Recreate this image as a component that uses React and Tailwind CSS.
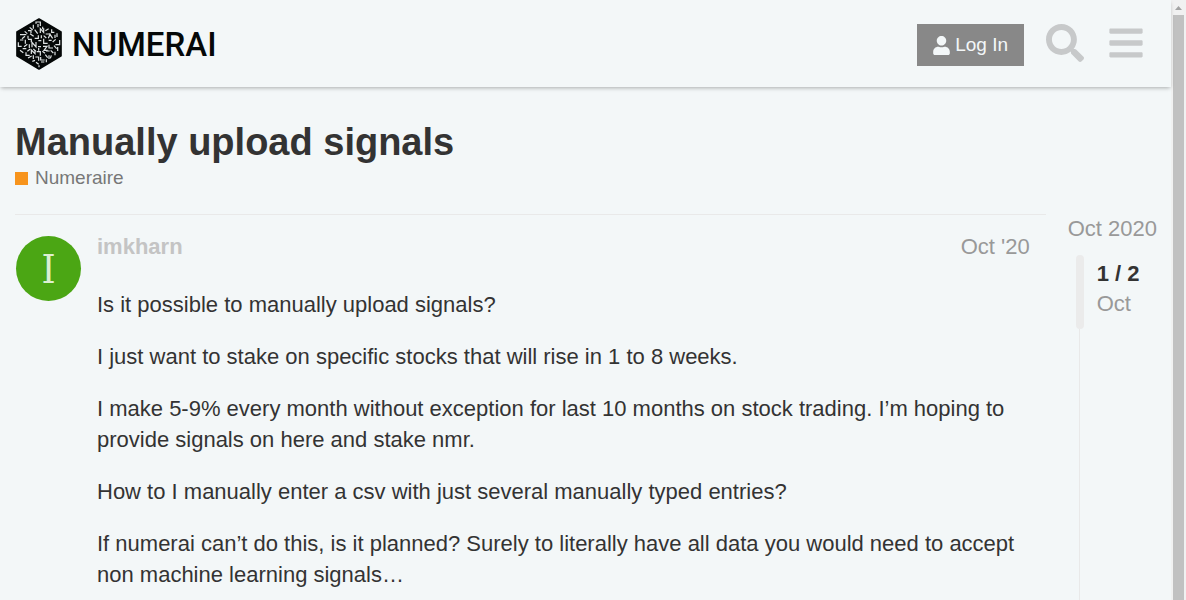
import { FaUser, FaSearch, FaBars } from "react-icons/fa";

const paragraphs = [
  "Is it possible to manually upload signals?",
  "I just want to stake on specific stocks that will rise in 1 to 8 weeks.",
  "I make 5-9% every month without exception for last 10 months on stock trading. I’m hoping to provide signals on here and stake nmr.",
  "How to I manually enter a csv with just several manually typed entries?",
  "If numerai can’t do this, is it planned? Surely to literally have all data you would need to accept non machine learning signals…",
];

function HexMark() {
  return (
    <svg viewBox="0 0 138 156" className="h-[52px] w-[46px]" aria-hidden="true">
      <path
        d="M69 3 L135 42 V113 L69 153 L3 113 V42 Z"
        fill="#050808"
        stroke="#050808"
        strokeWidth="5"
        strokeLinejoin="round"
      />
      <g fill="none" stroke="#dfe3e4" strokeWidth="3.6">
        <path d="M60 17V12H73V24M66 18V28M52 20V32M41 28L50 36M80 26V34M36 38H45V46" />
        <path d="M26 40L34 47M12 50H31M56 35L65 47M73 45V32L83 43V31M88 38L98 32M89 48H103" />
        <path d="M107 34V43H115M18 62L27 55M36 53V62M42 47L53 55M56 61H67V52M76 52V61M83 53L91 60" />
        <path d="M97 61L102 49L110 61M117 50V60M123 46V57M7 73V85H17M12 66H22M28 65V77M36 64H46V73" />
        <path d="M48 88V73L60 87V72M67 68H76M83 62V76H95M98 67H107M110 72L119 64M131 66V80H118" />
        <path d="M24 86L34 79M40 79V90M20 92H31M34 100L43 93M52 93L60 100M66 86H75M68 98V90" />
        <path d="M81 85H93L84 97H95M99 80V90H111M114 83L122 92M125 87V99M12 97L22 104M30 103V112H41" />
        <path d="M46 108V96L57 107V96M62 101H73V113M79 100L87 106M90 99H101M104 97L112 105M117 101V112" />
        <path d="M36 120L47 114M52 112V123M58 117H68V128M74 117V126H86M88 110L95 119M99 112V123M106 112L103 121" />
        <path d="M49 130L57 127M60 133L68 139M75 132H85M69 142V148M91 124V133" />
      </g>
    </svg>
  );
}

function Header() {
  return (
    <header className="relative flex h-[87px] shrink-0 items-start justify-between pl-4 pr-7 shadow-[0_2px_4px_-1px_rgba(0,0,0,0.3)]">
      <a href="#home" aria-label="Numerai" className="flex items-center gap-2.5 pt-[18px]">
        <HexMark />
        <span className="pt-0.5 font-[Roboto,sans-serif] text-[33px] leading-[40px] font-medium text-[#050808]">
          NUMERAI
        </span>
      </a>
      <nav className="flex items-start pt-6">
        <button
          type="button"
          className="mr-[22px] flex h-[42px] items-center gap-[5px] bg-[#888888] px-4 text-[19px] text-[#f3f7f8]"
        >
          <FaUser className="h-[19px] w-[17px]" aria-hidden="true" />
          Log In
        </button>
        <button type="button" aria-label="Search" className="mr-[25px] text-[#c7c9ca]">
          <FaSearch className="size-[38px]" />
        </button>
        <button type="button" aria-label="Menu" className="text-[#c7c9ca]">
          <FaBars className="h-[38px] w-[34px]" />
        </button>
      </nav>
    </header>
  );
}

function Post() {
  return (
    <article className="flex min-w-0 flex-1 gap-4 border-t border-[#e9e9e9] pt-[21px]">
      <div className="ml-px flex size-[65px] shrink-0 items-center justify-center rounded-full bg-[#4ba614] font-['DejaVu_Serif_Condensed','DejaVu_Serif',serif] text-[40px] text-[#dcefd2]">
        I
      </div>
      <div className="min-w-0 flex-1">
        <div className="flex justify-between pr-4 leading-[22px]">
          <a href="#imkharn" className="font-bold text-[#c4c4c4]">
            imkharn
          </a>
          <a href="#post-1" className="text-[#999999]">
            Oct '20
          </a>
        </div>
        <div className="mt-[31px] flex flex-col gap-[21px] pr-4 leading-[31px] text-[#333333]">
          {paragraphs.map((text) => (
            <p key={text}>{text}</p>
          ))}
        </div>
      </div>
    </article>
  );
}

function Timeline() {
  return (
    <aside className="flex shrink-0 flex-col pr-3.5 leading-[30px] text-[#999999]">
      <a href="#first">Oct 2020</a>
      <div className="ml-2 mt-[11px] flex flex-1 gap-[13px]">
        <div className="flex w-2 flex-col items-center">
          <div className="h-[74px] w-2 shrink-0 rounded-full bg-[#ebebeb]" />
          <div className="w-px flex-1 bg-[#e9e9e9]" />
        </div>
        <div className="pt-1">
          <div className="font-bold text-[#333333]">1 / 2</div>
          <div>Oct</div>
        </div>
      </div>
    </aside>
  );
}

function Scrollbar() {
  return (
    <div className="flex w-[15px] shrink-0 flex-col items-center bg-[#f1f1f1]" aria-hidden="true">
      <svg viewBox="0 0 15 15" className="size-[15px]">
        <path d="M4 10H11L7.500 6Z" fill="#a3a3a3" />
      </svg>
      <div className="w-[11px] flex-1 bg-[#c1c1c1]" />
    </div>
  );
}

export default function App() {
  return (
    <div className="flex h-screen overflow-hidden bg-[#f3f7f8] font-['Liberation_Sans',Arial,sans-serif] text-[22px]">
      <div className="flex min-w-0 flex-1 flex-col">
        <Header />
        <div className="px-[15px] pt-8">
          <h1 className="text-[38px] leading-[46px] font-bold text-[#333333]">
            Manually upload signals
          </h1>
          <a
            href="#numeraire"
            className="flex items-center gap-[7px] text-[19px] leading-[26px] text-[#777777]"
          >
            <span className="size-[13px] bg-[#f7941d]" />
            Numeraire
          </a>
        </div>
        <main className="mt-[23px] flex flex-1 gap-[22px] pl-[15px]">
          <Post />
          <Timeline />
        </main>
      </div>
      <Scrollbar />
    </div>
  );
}
